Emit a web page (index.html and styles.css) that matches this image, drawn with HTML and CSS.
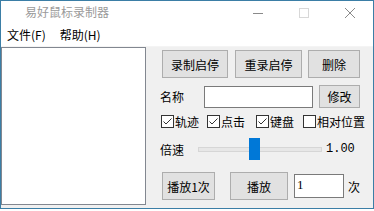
FILE: index.html
```html
<!DOCTYPE html>
<html lang="zh-CN">
<head>
<meta charset="utf-8">
<title>易好鼠标录制器</title>
<link rel="stylesheet" href="styles.css">
</head>
<body>
<div class="window">
  <div class="titlebar">
    <span class="title">易好鼠标录制器</span>
    <div class="caps">
      <span class="cap"><svg class="glyph" width="10" height="10" viewBox="0 0 10 10"><path d="M0 5.5H10" stroke="#8a8a8a" stroke-width="1"/></svg></span>
      <span class="cap"><svg class="glyph" width="10" height="10" viewBox="0 0 10 10"><rect x="0.5" y="0.5" width="9" height="9" fill="none" stroke="#d8d8d8" stroke-width="1"/></svg></span>
      <span class="cap"><svg class="glyph" width="10" height="10" viewBox="0 0 10 10"><path d="M0 0L10 10M10 0L0 10" stroke="#8a8a8a" stroke-width="1"/></svg></span>
    </div>
  </div>
  <div class="menubar">
    <span class="menu-item">文件(F)</span>
    <span class="menu-item">帮助(H)</span>
  </div>
  <div class="client">
    <div class="list"></div>
    <div class="panel">
      <div class="row row-top">
        <div class="btn btn-rec">录制启停</div>
        <div class="btn btn-rerec">重录启停</div>
        <div class="btn btn-del">删除</div>
      </div>
      <div class="row row-name">
        <span class="label label-name">名称</span>
        <div class="edit edit-name"></div>
        <div class="btn btn-mod">修改</div>
      </div>
      <div class="row row-checks">
        <label class="check"><svg class="box" width="13" height="13" viewBox="0 0 13 13"><rect x="0.5" y="0.5" width="12" height="12" fill="#fff" stroke="#333"/><path d="M2.5 6.5L5 9L10.5 3.5" fill="none" stroke="#333" stroke-width="1"/></svg><span>轨迹</span></label>
        <label class="check"><svg class="box" width="13" height="13" viewBox="0 0 13 13"><rect x="0.5" y="0.5" width="12" height="12" fill="#fff" stroke="#333"/><path d="M2.5 6.5L5 9L10.5 3.5" fill="none" stroke="#333" stroke-width="1"/></svg><span>点击</span></label>
        <label class="check"><svg class="box" width="13" height="13" viewBox="0 0 13 13"><rect x="0.5" y="0.5" width="12" height="12" fill="#fff" stroke="#333"/><path d="M2.5 6.5L5 9L10.5 3.5" fill="none" stroke="#333" stroke-width="1"/></svg><span>键盘</span></label>
        <label class="check"><svg class="box" width="13" height="13" viewBox="0 0 13 13"><rect x="0.5" y="0.5" width="12" height="12" fill="#fff" stroke="#333"/></svg><span>相对位置</span></label>
      </div>
      <div class="row row-speed">
        <span class="label label-speed">倍速</span>
        <div class="slider">
          <div class="track"></div>
          <div class="thumb"></div>
        </div>
        <span class="speed-val">1.00</span>
      </div>
      <div class="row row-play">
        <div class="btn btn-once">播放1次</div>
        <div class="btn btn-play">播放</div>
        <div class="edit edit-count">1</div>
        <span class="label label-times">次</span>
      </div>
    </div>
  </div>
</div>
</body>
</html>
```

FILE: styles.css
```css
* { box-sizing: border-box; }
html, body { margin: 0; padding: 0; background: #ffffff; }
body {
  width: 374px;
  height: 211px;
  overflow: hidden;
  font-family: "Noto Sans CJK SC", "Noto Sans", sans-serif;
  font-size: 12px;
  color: #000;
}
.window {
  width: 374px;
  height: 209px;
  border: 1px solid #3b7ea6;
  display: flex;
  flex-direction: column;
  background: #fff;
}
.titlebar {
  height: 22px;
  flex: none;
  display: flex;
  align-items: center;
}
.title {
  margin-left: 24px;
  color: #9a9a9a;
  line-height: 22px;
}
.caps {
  margin-left: auto;
  display: flex;
  height: 22px;
}
.cap {
  width: 46px;
  height: 22px;
  display: flex;
  justify-content: center;
  align-items: flex-start;
}
.glyph { margin-top: 7px; display: block; }
.menubar {
  height: 24px;
  flex: none;
  display: flex;
  align-items: center;
  padding-top: 1px;
  border-bottom: 1px solid #f4f4f4;
}
.menu-item { margin-left: 6px; margin-right: 8px; line-height: 16px; }
.client {
  flex: 1;
  display: flex;
  background: #f0f0f0;
}
.list {
  width: 145px;
  height: 158px;
  border: 1px solid #828790;
  background: #fff;
  flex: none;
}
.panel {
  margin-left: 14px;
  padding-top: 3px;
  display: flex;
  flex-direction: column;
}
.row { display: flex; align-items: center; }
.btn {
  background: #e1e1e1;
  border: 1px solid #adadad;
  display: flex;
  align-items: center;
  justify-content: center;
  flex: none;
}
.edit {
  background: #fff;
  border: 1px solid #7a7a7a;
  flex: none;
}
.row-top { height: 28px; margin-left: 2px; }
.btn-rec { width: 66px; height: 28px; }
.btn-rerec { width: 67px; height: 28px; margin-left: 7px; }
.btn-del { width: 52px; height: 28px; margin-left: 6px; }
.row-name { height: 23px; margin-top: 7px; }
.label-name { width: 44px; }
.edit-name { width: 109px; height: 22px; margin-top: 1px; }
.btn-mod { width: 41px; height: 23px; margin-left: 6px; }
.row-checks {
  margin-top: 5px;
  height: 16px;
  margin-left: 1px;
  display: grid;
  grid-template-columns: 46px 49px 47px auto;
}
.check { display: flex; align-items: center; white-space: nowrap; }
.box { display: block; flex: none; margin-right: 1px; }
.row-speed { margin-top: 9px; height: 22px; }
.label-speed { width: 38px; }
.slider { position: relative; width: 124px; height: 22px; }
.track {
  position: absolute;
  left: 0;
  right: 0;
  top: 9px;
  height: 5px;
  background: #e7e7e7;
  border: 1px solid #d6d6d6;
}
.thumb {
  position: absolute;
  left: 51px;
  top: 0;
  width: 11px;
  height: 22px;
  background: #0078d7;
}
.speed-val {
  margin-left: 4px;
  font-family: "Liberation Mono", monospace;
  font-size: 12px;
}
.row-play { margin-top: 12px; height: 28px; margin-left: 2px; }
.btn-once { width: 53px; height: 28px; }
.btn-play { width: 58px; height: 28px; margin-left: 15px; }
.edit-count {
  width: 50px;
  height: 24px;
  margin-left: 6px;
  padding-left: 2px;
  font-family: "Liberation Serif", serif;
  font-size: 13px;
  line-height: 20px;
}
.label-times { margin-left: 4px; }
```
